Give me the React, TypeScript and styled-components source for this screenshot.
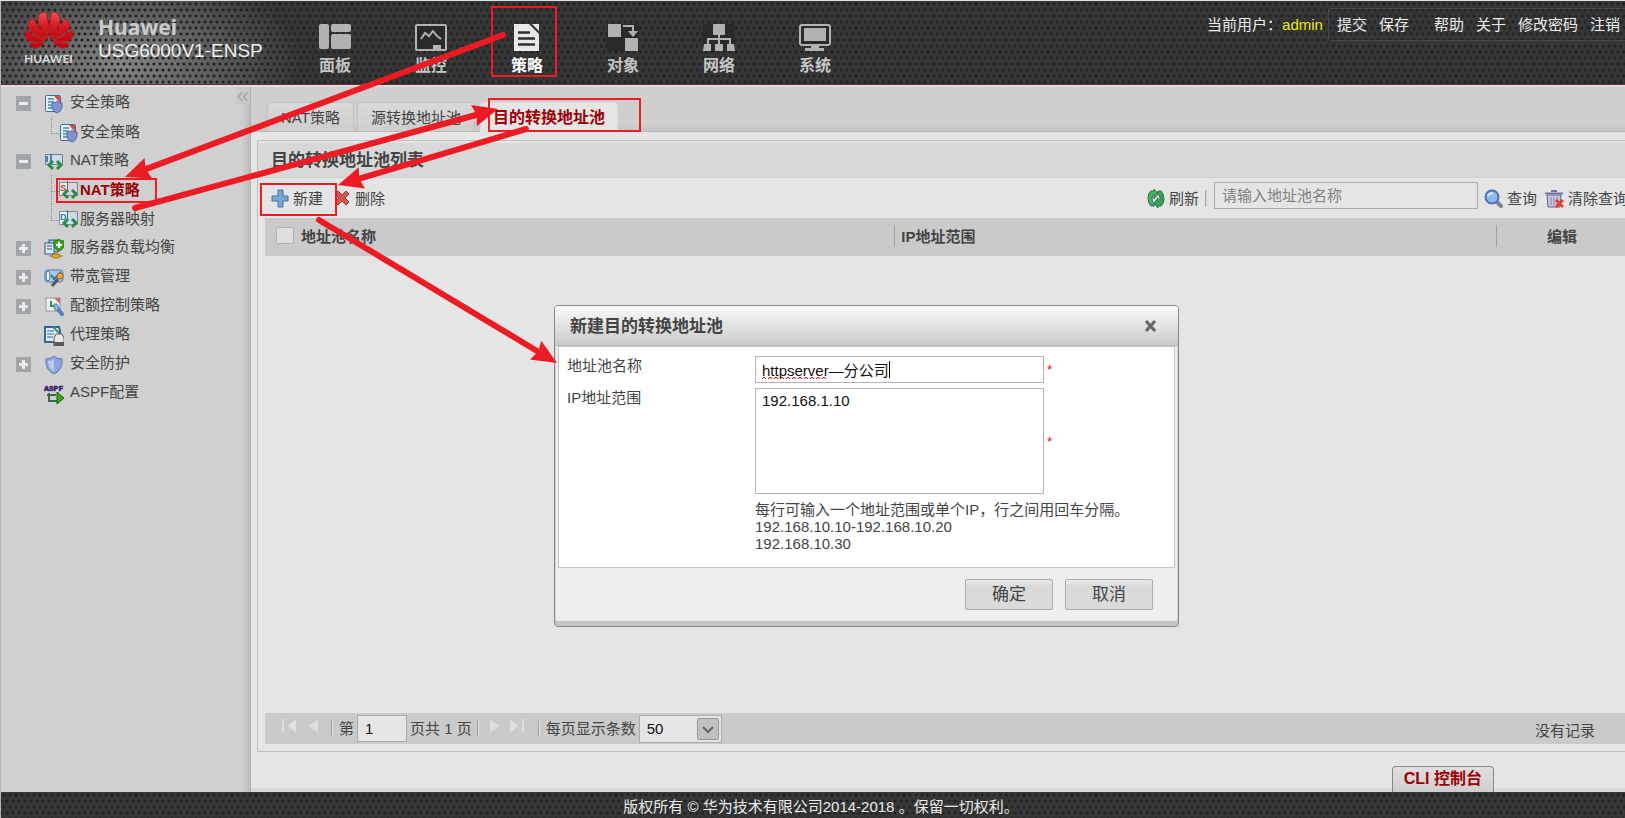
import React from "react";
import styled, { createGlobalStyle, css } from "styled-components";
import { SiHuawei } from "react-icons/si";

const GlobalStyle = createGlobalStyle`
  *, *::before, *::after { box-sizing: border-box; }
  body {
    margin: 0;
    background: #b4b4b4;
    color: #444;
    font: 15px/17px "Liberation Sans", "Noto Sans CJK SC", sans-serif;
  }
  button, input, textarea, select { font: inherit; color: inherit; margin: 0; }
  h1, h2, p, ul { margin: 0; padding: 0; font-weight: inherit; font-size: inherit; }
  ul { list-style: none; }
`;

const dots = `
  radial-gradient(circle at 3px 3px, #232325 1px, transparent 2px),
  radial-gradient(circle at 0 9px, #232325 1px, transparent 2px),
  radial-gradient(circle at 6px 9px, #232325 1px, transparent 2px)
`;

const Page = styled.div`
  position: relative;
  display: flex;
  flex-direction: column;
  min-height: 100vh;
  overflow: hidden;
  padding-left: 1px;
  border-top: 1px solid #dce5dc;
`;

/* ---------- top bar ---------- */

const TopBar = styled.header`
  display: flex;
  align-items: flex-start;
  height: 86px;
  background-color: #363637;
  background-image:
    ${dots},
    radial-gradient(ellipse 180px 100px at 120px 60px, #868686, transparent);
  background-size: 6px 12px, 6px 12px, 6px 12px, 100% 100%;
  border-bottom: 2px solid #e2dede;
  box-shadow: inset 0 -1px 0 #6b2a30;
`;

const Brand = styled.div`
  display: flex;
  width: 286px;
  padding: 5px 0 0 22px;
  gap: 24px;
`;

const Logo = styled.div`
  display: flex;
  flex-direction: column;
  align-items: center;
  width: 51px;
  color: #d6d6d6;
  font: bold 12px/14px Lato, sans-serif;
`;

const LogoMark = styled(SiHuawei)`
  flex: none;
  width: 50px;
  height: 48px;
  margin-bottom: -2px;
  overflow: visible;
  fill: url(#petal);
  stroke: #c8141c;
  stroke-width: 0.5;
`;

const Product = styled.h1`
  padding-top: 9px;
  color: #f0f0f0;
  font-size: 19px;
  line-height: 22px;
`;

const Vendor = styled.span`
  display: block;
  color: #cacaca;
  font: bold 21px/25px "Noto Sans", sans-serif;
`;

const MainNav = styled.nav`
  display: flex;
`;

const NavItem = styled.a<{ $active?: boolean }>`
  display: flex;
  flex-direction: column;
  align-items: center;
  gap: 3px;
  width: 96px;
  padding-top: 22px;
  color: ${(p) => (p.$active ? "#fff" : "#c4c4c4")};
  font-size: 16px;
  line-height: 22px;
  font-weight: bold;
  text-decoration: none;
  svg { display: block; color: ${(p) => (p.$active ? "#e8e8e8" : "#b2b2b2")}; }
`;

const UserBar = styled.div`
  display: flex;
  align-items: center;
  height: 33px;
  margin: 7px 0 0 auto;
  color: #ececec;
  white-space: nowrap;
`;

const UserName = styled.span`
  color: #e8ee00;
`;

const UserLinks = styled.div`
  display: flex;
  align-items: center;
  gap: 12px;
  height: 33px;
  margin-left: 5px;
  padding: 0 5px 0 8px;
  border: 1px solid #48484b;
  border-right: 0;
  border-radius: 3px 0 0 3px;
`;

const UserLink = styled.a<{ $apart?: boolean }>`
  color: inherit;
  text-decoration: none;
  margin-left: ${(p) => (p.$apart ? "13px" : "0")};
`;

/* ---------- side tree ---------- */

const Body = styled.div`
  display: flex;
  flex: 1;
`;

const Sidebar = styled.aside`
  position: relative;
  flex: none;
  width: 250px;
  padding-top: 1px;
  background: linear-gradient(to right, #d0d0d0 240px, #bcbcbc);
  border-right: 1px solid #b0b0b0;
`;

const Collapse = styled.button`
  position: absolute;
  top: 0;
  right: 0;
  padding: 0 1px;
  border: 0;
  background: #c9c9c9;
  color: #aaa;
  font-size: 22px;
  line-height: 17px;
`;

const TreeRow = styled.li<{ $child?: boolean }>`
  display: flex;
  align-items: center;
  height: 29px;
  padding: ${(p) => (p.$child ? "0 0 0 50px" : "0 0 2px 15px")};
`;

const Toggle = styled.button<{ $hidden?: boolean }>`
  width: 15px;
  height: 15px;
  margin: 4px 13px 0 0;
  padding: 0;
  border: 0;
  background: #a2a5a8;
  visibility: ${(p) => (p.$hidden ? "hidden" : "visible")};
  svg { display: block; }
`;

const Branch = styled.span<{ $last?: boolean }>`
  position: relative;
  width: 8px;
  height: 29px;
  border-left: 1px dotted #8c8c8c;
  ${(p) => p.$last && "height: 17px; align-self: flex-start;"}
  &::after {
    content: "";
    position: absolute;
    left: 0;
    top: 16px;
    width: 7px;
    border-top: 1px dotted #8c8c8c;
  }
`;

const TreeLink = styled.a<{ $active?: boolean; $child?: boolean }>`
  display: flex;
  align-items: center;
  gap: ${(p) => (p.$child ? "1px" : "6px")};
  color: ${(p) => (p.$active ? "#9c0006" : "#444")};
  font-weight: ${(p) => (p.$active ? "bold" : "normal")};
  text-decoration: none;
  svg { display: block; margin-top: ${(p) => (p.$child ? "3px" : "5px")}; }
`;

/* ---------- content ---------- */

const Content = styled.main`
  display: flex;
  flex: 1;
  flex-direction: column;
  min-width: 0;
  overflow: hidden;
  background: #e5e5e5;
`;

const Tabs = styled.div`
  display: flex;
  align-items: flex-end;
  gap: 3px;
  height: 45px;
  padding-left: 16px;
  background: linear-gradient(#cfcfcf 38px, #c4c4c4);
  border-bottom: 1px solid #b8b8b8;
`;

const Tab = styled.button<{ $active?: boolean }>`
  height: 29px;
  padding: 0 13px;
  border: 1px solid #c2c2c2;
  border-bottom: 0;
  border-radius: 4px 4px 0 0;
  background: linear-gradient(#dadada, #cdcdcd);
  white-space: nowrap;
  ${(p) =>
    p.$active &&
    css`
      height: 30px;
      margin: 0 0 -1px 2px;
      padding: 0 12px;
      border-color: #dcdcdc;
      background: #e5e5e5;
      color: #9c0006;
      font-size: 16px;
      font-weight: bold;
    `}
`;

const Panel = styled.section`
  display: flex;
  flex: 1;
  flex-direction: column;
  margin: 8px -12px 0 6px;
  border: 1px solid #c0c0c0;
  padding-top: 2px;
`;

const PanelTitle = styled.h2`
  padding: 2px 13px 0;
  border-bottom: 1px solid #cfcfcf;
  background: #d8d8d8;
  font-size: 17px;
  line-height: 32px;
  font-weight: bold;
`;

const Toolbar = styled.div`
  display: flex;
  align-items: center;
  height: 40px;
  padding: 0 8px 0 13px;
  white-space: nowrap;
`;

const ToolButton = styled.button`
  display: flex;
  align-items: center;
  gap: 4px;
  margin-right: 10px;
  padding: 0;
  border: 0;
  background: none;
  &:last-child { margin-right: 0; }
`;

const SearchTools = styled.div`
  display: flex;
  align-items: center;
  margin-left: auto;
  ${ToolButton} + ${ToolButton} { margin-left: -2px; }
`;

const ToolRule = styled.span`
  width: 2px;
  height: 17px;
  margin: 0 7px 0 -4px;
  border-left: 1px solid #a8a8a8;
  background: #d2d2d2;
`;

const SearchInput = styled.input`
  width: 264px;
  height: 27px;
  margin: 0 6px 5px 0;
  padding: 0 7px;
  border: 1px solid #a9a9ad;
  background: #e5e5e5;
  &::placeholder { color: #808080; opacity: 1; }
`;

const TableArea = styled.div`
  flex: 1;
  margin: 0 3px 0 7px;
`;

const Table = styled.table`
  width: 100%;
  border-collapse: collapse;
  table-layout: fixed;
  background: #cacaca;
`;

const HeadCell = styled.th<{ $width?: string }>`
  width: ${(p) => p.$width || "auto"};
  height: 38px;
  padding: 0 0 2px;
  text-align: left;
`;

const HeadLabel = styled.div<{ $ruled?: boolean; $center?: boolean }>`
  display: flex;
  align-items: center;
  gap: 7px;
  height: 22px;
  padding-left: ${(p) => (p.$ruled ? "6px" : "11px")};
  ${(p) => p.$ruled && "border-left: 1px solid #a2a2a2;"}
  ${(p) => p.$center && "justify-content: center; padding: 0 6px 0 0;"}
`;

const CheckBox = styled.input`
  appearance: none;
  width: 18px;
  height: 17px;
  margin-bottom: 2px;
  border: 1px solid #b2b2b2;
  border-radius: 2px;
  background: #dedede;
`;

const Pager = styled.div`
  display: flex;
  align-items: center;
  height: 31px;
  margin: 0 3px 7px 7px;
  padding: 0 38px 0 16px;
  background: #cacaca;
  white-space: nowrap;
`;

const PageButton = styled.button`
  padding: 0;
  margin-right: 11px;
  border: 0;
  background: none;
  svg { display: block; margin-bottom: 5px; }
`;

const PagerRule = styled.span`
  width: 2px;
  height: 16px;
  margin: 0 6px 0 2px;
  border-left: 1px solid #9c9c9c;
  background: #e4e4e4;
`;

const PageInput = styled.input`
  width: 50px;
  height: 27px;
  margin: 0 3px;
  padding: 0 7px;
  border: 1px solid #aaa;
  background: #e5e5e5;
  color: #111;
`;

const PageTotal = styled.span`
  margin-right: 3px;
`;

const SelectBox = styled.div`
  position: relative;
  margin-left: 3px;
  svg { position: absolute; top: 3px; right: 3px; pointer-events: none; }
`;

const Select = styled.select`
  appearance: none;
  display: block;
  width: 83px;
  height: 28px;
  padding: 0 7px;
  border: 1px solid #aaa;
  border-radius: 0;
  background: #e5e5e5;
  color: #111;
`;

const PagerNote = styled.span`
  margin-left: auto;
  padding-top: 4px;
`;

const ConsoleBar = styled.div`
  display: flex;
  justify-content: flex-end;
  align-items: flex-end;
  height: 40px;
  padding-right: 131px;
  background: linear-gradient(#e5e5e5 36px, #dadada 36px);
`;

const ConsoleTab = styled.button`
  height: 26px;
  padding: 0 11px 2px;
  border: 1px solid #888;
  border-bottom: 0;
  border-radius: 4px 4px 0 0;
  background: linear-gradient(#e0e0e0, #cdcdcd);
  color: #9c0006;
  font-size: 16px;
  font-weight: bold;
`;

const Footer = styled.footer`
  background-color: #363637;
  background-image: ${dots};
  background-size: 6px 12px;
  padding: 4px 0 0 16px;
  color: #ececec;
  line-height: 22px;
  text-align: center;
`;

/* ---------- dialog ---------- */

const Dialog = styled.form`
  position: absolute;
  top: 304px;
  left: 554px;
  width: 625px;
  padding: 0 3px;
  border: 1px solid #868686;
  border-radius: 4px;
  background: #eee;
  box-shadow: inset 0 -5px 0 #c6c6c6, inset 1px 0 0 #d4d4d4, inset -1px 0 0 #d4d4d4;
`;

const DialogHead = styled.div`
  display: flex;
  align-items: center;
  justify-content: space-between;
  height: 40px;
  margin: 0 -3px;
  padding: 0 20px 0 15px;
  border-radius: 3px 3px 0 0;
  background: linear-gradient(#fafafa, #cacaca);
  border-bottom: 1px solid #b8b8b8;
`;

const DialogTitle = styled.h2`
  padding-top: 2px;
  font-size: 17px;
  line-height: 24px;
  font-weight: bold;
`;

const CloseButton = styled.button`
  padding: 0;
  border: 0;
  background: none;
  svg { display: block; }
`;

const DialogBody = styled.div`
  display: grid;
  grid-template-columns: 188px 289px 1fr;
  gap: 5px 0;
  padding: 9px 0 15px 8px;
  border: 1px solid #c6c6c6;
  background: #fff;
`;

const FieldLabel = styled.label`
  line-height: 19px;
`;

const FieldWrap = styled.div`
  position: relative;
  display: flex;
`;

const textField = css`
  width: 100%;
  border: 1px solid #b4b4b8;
  border-radius: 0;
  background: #fff;
  color: #111;
`;

const TextInput = styled.input`
  ${textField}
  height: 27px;
  padding: 0 6px;
`;

const TextArea = styled.textarea`
  ${textField}
  height: 106px;
  padding: 3px 6px;
  resize: none;
`;

const Caret = styled.i`
  position: absolute;
  left: 134px;
  top: 5px;
  width: 1px;
  height: 17px;
  background: #000;
`;

const Squiggle = styled.svg`
  position: absolute;
  left: 7px;
  bottom: 4px;
`;

const Required = styled.span`
  align-self: center;
  padding-left: 3px;
  color: #f00;
  font-size: 13px;
`;

const Hint = styled.p`
  grid-column: 2 / 4;
  padding-top: 2px;
`;

const DialogFoot = styled.div`
  display: flex;
  justify-content: flex-end;
  gap: 12px;
  padding: 11px 22px 16px;
`;

const DialogButton = styled.button`
  width: 88px;
  height: 31px;
  padding: 1px 0 0;
  border: 1px solid #ababb0;
  border-radius: 2px;
  background: linear-gradient(#e6e6e6 4px, #dadada 5px);
  font-size: 17px;
  line-height: 24px;
`;

/* ---------- annotations ---------- */

const Annotations = styled.svg`
  position: absolute;
  left: 0;
  top: -1px;
  width: 100%;
  height: 100%;
  pointer-events: none;
`;

const RED = "#ed1c24";

function Arrow({ from, to }: { from: [number, number]; to: [number, number] }) {
  const dx = to[0] - from[0];
  const dy = to[1] - from[1];
  const length = Math.hypot(dx, dy);
  const angle = (Math.atan2(dy, dx) * 180) / Math.PI;
  return (
    <g transform={`translate(${from[0]} ${from[1]}) rotate(${angle})`}>
      <line x1="0" y1="0" x2={length - 18} y2="0" stroke={RED} strokeWidth="6" strokeLinecap="round" />
      <path d={`M${length} 0 l-25 -11 l3 11 l-3 11 Z`} fill={RED} />
    </g>
  );
}

/* ---------- icons ---------- */

const navIcons: Record<string, React.ReactNode> = {
  panel: (
    <g fill="currentColor">
      <rect x="0" y="1" width="10" height="25" rx="2" />
      <rect x="12" y="1" width="20" height="8" rx="2" />
      <rect x="12" y="11" width="20" height="15" rx="2" />
    </g>
  ),
  monitor: (
    <>
      <rect x="1" y="2" width="30" height="25" rx="1" fill="#2a2a2b" stroke="currentColor" strokeWidth="2" />
      <path d="M6 16l4-6 4 3 4-5 4 5 4 3" fill="none" stroke="currentColor" strokeWidth="2" />
      <rect x="18" y="22" width="8" height="4" fill="currentColor" />
    </>
  ),
  policy: (
    <>
      <path d="M3 1h15l10 10v17H3z" fill="currentColor" />
      <path d="M21 1h7v7z" fill="currentColor" />
      <path d="M7 9.500h12M7 15.500h17M7 21.500h17" stroke="#2f2f30" strokeWidth="2.500" />
    </>
  ),
  object: (
    <>
      <rect x="0" y="1" width="32" height="27" fill="#2a2a2b" />
      <rect x="1" y="1" width="13" height="13" fill="currentColor" />
      <rect x="18" y="15" width="13" height="13" fill="currentColor" />
      <path d="M16 3h10v6" fill="none" stroke="currentColor" strokeWidth="2" />
      <path d="M21 8h10l-5 6z" fill="currentColor" />
    </>
  ),
  network: (
    <>
      <rect x="0" y="1" width="32" height="27" fill="#2a2a2b" />
      <rect x="10" y="1" width="12" height="11" rx="1" fill="currentColor" />
      <path d="M16 11v11M5 22v-6h22v6" fill="none" stroke="currentColor" strokeWidth="2" />
      <path d="M1 21h7v7H0zM12 21h8v7h-8zM24 21h7l1 7h-8z" fill="currentColor" />
    </>
  ),
  system: (
    <>
      <rect x="1" y="2" width="30" height="20" rx="2" fill="#2a2a2b" stroke="currentColor" strokeWidth="2" />
      <rect x="5" y="5" width="22" height="13" fill="currentColor" />
      <path d="M12 22h8v3h5v3H6v-3h6z" fill="currentColor" />
    </>
  ),
};

const shield = "M0 2q4 0 5-2q1 2 5 2q1 8-5 10q-6-2-5-10z";

const natArrows = (
  <path d="M9 9l-4 4 4 4M13 9l4 4-4 4" fill="none" stroke="#2c8a45" strokeWidth="3" />
);

const treeIcons: Record<string, React.ReactNode> = {
  policy: (
    <>
      <rect x="1.500" y="1.500" width="15" height="16" rx="1" fill="#e4eef6" stroke="#3a7096" />
      <path d="M4 5h6M4 8h6M4 11h4M4 14h4" stroke="#4a86b4" strokeWidth="1.500" />
      <path d="M10 2h6v7z" fill="#e04a4a" />
      <path transform="translate(8 7)" d={shield} fill="#7f92cc" stroke="#566aa6" />
    </>
  ),
  nat: (
    <>
      <path d="M1.500 2.500h17v10h-17z" fill="#cddcea" stroke="#6c8298" />
      <path d="M3 4v6M7 2v10" stroke="#2f5f96" strokeWidth="1.500" />
      {natArrows}
    </>
  ),
  natSource: (
    <>
      <path d="M.500 1.500h18v13H.500z" fill="#e0d0e6" stroke="#7c8a98" />
      <path d="M1 2h7v12H1z" fill="#f1ece6" />
      <path d="M8.500 0v10" stroke="#666" />
      <text x="1" y="10" fontSize="9" fontWeight="bold" fill="#a0522d">S</text>
      {natArrows}
    </>
  ),
  natServer: (
    <>
      <path d="M.500 1.500h18v13H.500z" fill="#c9dceb" stroke="#7c8a98" />
      <path d="M1 2h7v12H1z" fill="#eef3f6" />
      <path d="M8.500 0v10" stroke="#666" />
      <text x="1" y="10" fontSize="9" fontWeight="bold" fill="#1c7fc4">D</text>
      {natArrows}
    </>
  ),
  balance: (
    <>
      <rect x="5" y="1" width="9" height="12" fill="#a9c3df" stroke="#35577f" />
      <rect x="1" y="4" width="9" height="11" fill="#dbe7f2" stroke="#35577f" />
      <path d="M3 7h5M3 10h5" stroke="#35577f" />
      <path transform="translate(10 0)" d={shield} fill="#3aa818" stroke="#1f7a0c" />
      <path d="M15 3v6M12 6h6" stroke="#fff" strokeWidth="2" />
      <path d="M5 17h14" stroke="#777" />
      <rect x="8" y="15" width="8" height="4" rx="2" fill="#e2a926" stroke="#9a6d0c" />
    </>
  ),
  bandwidth: (
    <>
      <rect x="1" y="2" width="18" height="12" rx="3" fill="#a9c8e6" stroke="#4c78a8" />
      <ellipse cx="4" cy="8" rx="2" ry="5" fill="#e6f0f8" stroke="#4c78a8" />
      <path d="M7 7l3 4 7-7" fill="none" stroke="#2473b8" strokeWidth="2" />
      <path d="M8 18l6-7" stroke="#555" strokeWidth="3" />
      <circle cx="16" cy="8" r="3" fill="#f0a63a" stroke="#a86410" />
    </>
  ),
  quota: (
    <>
      <rect x="2" y="1" width="14" height="13" fill="#eef0f0" stroke="#8d979c" />
      <path d="M10 1h6v6z" fill="#e26060" />
      <path d="M7 4v5h5" fill="none" stroke="#2f8f52" strokeWidth="2" />
      <path d="M13 11l5 6" stroke="#5283ba" strokeWidth="4" strokeLinecap="round" />
      <path d="M10 7l3 0 2 4-3 3-2-3z" fill="#8fb2d8" stroke="#5283ba" />
    </>
  ),
  proxy: (
    <>
      <path d="M1 1h14l1 4v11H1z" fill="#e4eef7" stroke="#2d67a0" strokeWidth="2" />
      <path d="M3 5h7M3 8h7M3 11h6" stroke="#2d67a0" />
      <path d="M9 1l6 6" stroke="#3d9a4c" strokeWidth="2" />
      <path d="M10 12l2-4h6l2 4v8H10z" fill="#e6e6e6" stroke="#5a5a5a" />
      <path d="M10 16h10v4H10z" fill="#5a5a5a" />
    </>
  ),
  shield: (
    <>
      <path d="M2 4q6 0 8-3q2 3 8 3q1 11-8 15q-9-4-8-15z" fill="#8fa6dc" stroke="#5b76b4" />
      <path d="M10 4v12q-6-3-6-10q4 0 6-2z" fill="#b9c8ee" />
    </>
  ),
  aspf: (
    <>
      <text x="0" y="7" fontSize="8" fontWeight="bold" fontFamily="Liberation Mono" fill="#3a1470" stroke="#3a1470" strokeWidth="0.500">ASPF</text>
      <path d="M5 9v8h5M3 11h9M10 17h3" fill="none" stroke="#3c6a50" strokeWidth="2" />
      <path d="M13 8l7 6-7 6z" fill="#3aa818" stroke="#1c5f10" />
    </>
  ),
};

const TreeIcon = ({ name }: { name: string }) => (
  <svg width="20" height="20" aria-hidden="true">{treeIcons[name]}</svg>
);

/* ---------- data ---------- */

const navItems = [
  { icon: "panel", label: "面板" },
  { icon: "monitor", label: "监控" },
  { icon: "policy", label: "策略", active: true },
  { icon: "object", label: "对象" },
  { icon: "network", label: "网络" },
  { icon: "system", label: "系统" },
];

type Node = { icon: string; label: string; toggle?: "plus" | "minus"; child?: boolean; last?: boolean; active?: boolean };

const tree: Node[] = [
  { icon: "policy", label: "安全策略", toggle: "minus" },
  { icon: "policy", label: "安全策略", child: true, last: true },
  { icon: "nat", label: "NAT策略", toggle: "minus" },
  { icon: "natSource", label: "NAT策略", child: true, active: true },
  { icon: "natServer", label: "服务器映射", child: true, last: true },
  { icon: "balance", label: "服务器负载均衡", toggle: "plus" },
  { icon: "bandwidth", label: "带宽管理", toggle: "plus" },
  { icon: "quota", label: "配额控制策略", toggle: "plus" },
  { icon: "proxy", label: "代理策略" },
  { icon: "shield", label: "安全防护", toggle: "plus" },
  { icon: "aspf", label: "ASPF配置" },
];

const userLinks = ["提交", "保存", "帮助", "关于", "修改密码", "注销"];

export default function App() {
  return (
    <>
      <GlobalStyle />
      <Page>
        <TopBar>
          <Brand>
            <Logo>
              <svg width="0" height="0" aria-hidden="true">
                <defs>
                  <linearGradient id="petal" x1="0" y1="0" x2="0" y2="1">
                    <stop offset="0" stopColor="#e8555a" />
                    <stop offset="0.400" stopColor="#d81820" />
                    <stop offset="1" stopColor="#b80008" />
                  </linearGradient>
                </defs>
              </svg>
              <LogoMark />
              HUAWEI
            </Logo>
            <Product>
              <Vendor>Huawei</Vendor>
              USG6000V1-ENSP
            </Product>
          </Brand>
          <MainNav>
            {navItems.map((item) => (
              <NavItem key={item.icon} href="#" $active={item.active}>
                <svg width="32" height="29" aria-hidden="true">{navIcons[item.icon]}</svg>
                {item.label}
              </NavItem>
            ))}
          </MainNav>
          <UserBar>
            当前用户：<UserName>admin</UserName>
            <UserLinks>
              {userLinks.map((text) => (
                <UserLink key={text} href="#" $apart={text === "帮助"}>{text}</UserLink>
              ))}
            </UserLinks>
          </UserBar>
        </TopBar>

        <Body>
          <Sidebar>
            <Collapse type="button" aria-label="收起">«</Collapse>
            <ul>
              {tree.map((node, i) => (
                <TreeRow key={i} $child={node.child}>
                  {node.child ? (
                    <Branch $last={node.last} />
                  ) : (
                    <Toggle type="button" $hidden={!node.toggle} aria-label="展开或收起">
                      <svg width="15" height="15">
                        <path d={node.toggle === "plus" ? "M3 7.500h9M7.500 3v9" : "M3 7.500h9"} stroke="#ececec" strokeWidth="3" />
                      </svg>
                    </Toggle>
                  )}
                  <TreeLink href="#" $active={node.active} $child={node.child}>
                    <TreeIcon name={node.icon} />
                    {node.label}
                  </TreeLink>
                </TreeRow>
              ))}
            </ul>
          </Sidebar>

          <Content>
            <Tabs>
              <Tab type="button">NAT策略</Tab>
              <Tab type="button">源转换地址池</Tab>
              <Tab type="button" $active>目的转换地址池</Tab>
            </Tabs>
            <Panel>
              <PanelTitle>目的转换地址池列表</PanelTitle>
              <Toolbar>
                <ToolButton type="button">
                  <svg width="18" height="20">
                    <path d="M7 2h5v6h5v5h-5v6H7v-6H1V8h6z" fill="#77a7d8" stroke="#48729f" />
                  </svg>
                  新建
                </ToolButton>
                <ToolButton type="button">
                  <svg width="18" height="18">
                    <path d="M5 2l4 4 4-4 3 3-4 4 4 4-3 3-4-4-4 4-3-3 4-4-4-4z" fill="#d65350" stroke="#a03432" strokeLinejoin="round" />
                  </svg>
                  删除
                </ToolButton>
                <SearchTools>
                  <ToolButton type="button">
                    <svg width="18" height="19">
                      <path d="M7 17H4Q1 14 1 9q0-5 3-7h3l0-2 4 5-4 5V6Q5 7 5 10q0 4 3 5z" fill="#4cab68" stroke="#1e7a40" />
                      <path d="M11 2h3q3 3 3 8 0 5-3 7h-3v2l-4-5 4-5v4q2-1 2-4 0-4-3-5z" fill="#3f9d5c" stroke="#1e7a40" />
                    </svg>
                    刷新
                  </ToolButton>
                  <ToolRule />
                  <SearchInput placeholder="请输入地址池名称" aria-label="地址池名称" />
                  <ToolButton type="button">
                    <svg width="19" height="19">
                      <path d="M12 12l5 5" stroke="#7c838c" strokeWidth="4" strokeLinecap="round" />
                      <circle cx="8" cy="8" r="6.500" fill="#8fb8ee" stroke="#4a72b4" strokeWidth="2" />
                      <path d="M4 7q1-3 5-3" fill="none" stroke="#dbe9fb" strokeWidth="2" />
                    </svg>
                    查询
                  </ToolButton>
                  <ToolButton type="button">
                    <svg width="19" height="19">
                      <path d="M2 6h14l-1 12H3z" fill="#c9c6e4" stroke="#65628c" />
                      <path d="M6 8v8M9 8v8M12 8v4" stroke="#8a87b4" />
                      <path d="M0 4.500h18M6 2h6" stroke="#77749c" strokeWidth="2" />
                      <path d="M11 11l7 7M18 11l-7 7" stroke="#e0452a" strokeWidth="3" />
                    </svg>
                    清除查询
                  </ToolButton>
                </SearchTools>
              </Toolbar>
              <TableArea>
                <Table>
                  <thead>
                    <tr>
                      <HeadCell $width="46%">
                        <HeadLabel>
                          <CheckBox type="checkbox" aria-label="全选" />
                          地址池名称
                        </HeadLabel>
                      </HeadCell>
                      <HeadCell $width="44%"><HeadLabel $ruled>IP地址范围</HeadLabel></HeadCell>
                      <HeadCell><HeadLabel $ruled $center>编辑</HeadLabel></HeadCell>
                    </tr>
                  </thead>
                </Table>
              </TableArea>
              <Pager>
                <PageButton type="button" aria-label="首页">
                  <svg width="16" height="14"><path d="M1 0h2v14H1zM15 0v14L7 7z" fill="#dedede" /></svg>
                </PageButton>
                <PageButton type="button" aria-label="上一页">
                  <svg width="10" height="14"><path d="M10 0v14L1 7z" fill="#dedede" /></svg>
                </PageButton>
                <PagerRule />
                <label htmlFor="page">第</label>
                <PageInput id="page" defaultValue="1" />
                <PageTotal>页共 1 页</PageTotal>
                <PagerRule />
                <PageButton type="button" aria-label="下一页">
                  <svg width="14" height="14"><path d="M5 0v14l9-7z" fill="#dedede" /></svg>
                </PageButton>
                <PageButton type="button" aria-label="末页">
                  <svg width="15" height="14"><path d="M12 0h2v14h-2zM0 0v14l8-7z" fill="#dedede" /></svg>
                </PageButton>
                <PagerRule />
                <label htmlFor="size">每页显示条数</label>
                <SelectBox>
                  <Select id="size" defaultValue="50">
                    <option>50</option>
                  </Select>
                  <svg width="22" height="22" aria-hidden="true">
                    <rect x=".500" y=".500" width="21" height="21" rx="1" fill="#c0c0c3" stroke="#96969a" />
                    <path d="M6 9l5 5 5-5" fill="none" stroke="#666" strokeWidth="2" />
                  </svg>
                </SelectBox>
                <PagerNote>没有记录</PagerNote>
              </Pager>
            </Panel>
            <ConsoleBar>
              <ConsoleTab type="button">CLI 控制台</ConsoleTab>
            </ConsoleBar>
          </Content>
        </Body>
        <Footer>版权所有 © 华为技术有限公司2014-2018 。保留一切权利。</Footer>

        <Dialog role="dialog" aria-labelledby="dialog-title" onSubmit={(e) => e.preventDefault()}>
          <DialogHead>
            <DialogTitle id="dialog-title">新建目的转换地址池</DialogTitle>
            <CloseButton type="button" aria-label="关闭">
              <svg width="15" height="14"><path d="M3 2l9 10M12 2L3 12" stroke="#666" strokeWidth="3" /></svg>
            </CloseButton>
          </DialogHead>
          <DialogBody>
            <FieldLabel htmlFor="pool-name">地址池名称</FieldLabel>
            <FieldWrap>
              <TextInput id="pool-name" defaultValue="httpserver—分公司" />
              <Squiggle width="67" height="3" aria-hidden="true">
                <path d="M0 3l2-2 2 2m2 0l2-2 2 2m2 0l2-2 2 2m2 0l2-2 2 2m2 0l2-2 2 2m2 0l2-2 2 2m2 0l2-2 2 2m2 0l2-2 2 2m2 0l2-2 2 2m2 0l2-2 2 2m2 0l2-2 2 2" fill="none" stroke="#f00" />
              </Squiggle>
              <Caret />
            </FieldWrap>
            <Required>*</Required>
            <FieldLabel htmlFor="pool-range">IP地址范围</FieldLabel>
            <FieldWrap>
              <TextArea id="pool-range" defaultValue="192.168.1.10" />
            </FieldWrap>
            <Required>*</Required>
            <Hint>
              每行可输入一个地址范围或单个IP，行之间用回车分隔。
              <br />
              192.168.10.10-192.168.10.20
              <br />
              192.168.10.30
            </Hint>
          </DialogBody>
          <DialogFoot>
            <DialogButton type="submit">确定</DialogButton>
            <DialogButton type="button">取消</DialogButton>
          </DialogFoot>
        </Dialog>

        <Annotations aria-hidden="true">
          <g fill="none" stroke={RED} strokeWidth="2">
            <rect x="492" y="7" width="64" height="69" />
            <rect x="489" y="99" width="151" height="32" />
            <rect x="261" y="184" width="75" height="31" />
            <rect x="57" y="179" width="99" height="23" />
          </g>
          <Arrow from={[503, 35]} to={[125, 177]} />
          <Arrow from={[135, 208]} to={[498, 109]} />
          <Arrow from={[526, 129]} to={[338, 185]} />
          <Arrow from={[319, 220]} to={[557, 363]} />
        </Annotations>
      </Page>
    </>
  );
}
